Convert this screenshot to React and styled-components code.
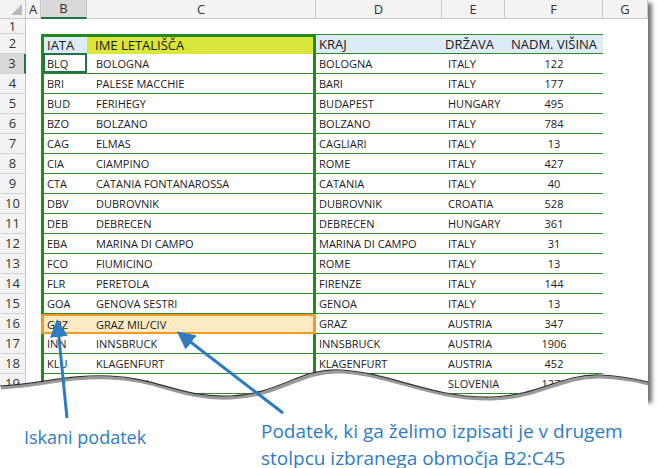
import React from "react";
import styled, { createGlobalStyle } from "styled-components";

const Global = createGlobalStyle`
  body { margin: 0; background: #fff; font-family: "Open Sans", "Liberation Sans", sans-serif; }
`;

const COLS = "26px 15px 46px 229px 126px 63px 98px 45px";

const Page = styled.div`
  position: relative;
  width: 657px;
  height: 468px;
  overflow: hidden;
  background: #fff;
`;

const Sheet = styled.div`
  width: 648px;
  height: 400px;
  overflow: hidden;
  background: #fff;
  box-shadow: 4px 3px 4px rgba(0, 0, 0, 0.55);
`;

const Row = styled.div`
  display: grid;
  grid-template-columns: ${COLS};
  height: ${(p) => p.$h}px;
  line-height: 1;
`;

const ColHead = styled.div`
  background: ${(p) => (p.$sel ? "#d9d9d9" : "#f3f3f3")};
  border-right: 1px solid #c8c8c8;
  border-bottom: ${(p) => (p.$sel ? "2px solid #217346" : "1px solid #c8c8c8")};
  font-size: 13px;
  color: #333;
  display: flex;
  align-items: center;
  justify-content: center;
  position: relative;
`;

const Corner = styled(ColHead)`
  &::after {
    content: "";
    position: absolute;
    right: 3px;
    bottom: 3px;
    border-left: 11px solid transparent;
    border-bottom: 11px solid #b9b9b9;
  }
`;

const RowHead = styled.div`
  background: ${(p) => (p.$sel ? "#d9d9d9" : "#f3f3f3")};
  border-right: ${(p) => (p.$sel ? "2px solid #217346" : "1px solid #c8c8c8")};
  border-bottom: 1px solid #d4d4d4;
  font-size: 13px;
  color: #333;
  display: flex;
  align-items: center;
  justify-content: center;
  overflow: hidden;
`;

const Cell = styled.div`
  display: flex;
  align-items: center;
  justify-content: ${(p) => (p.$center ? "center" : "flex-start")};
  padding-left: ${(p) => (p.$center ? 0 : 3)}px;
  font-size: ${(p) => (p.$head ? 13 : 11)}px;
  color: #1a1a1a;
  background: ${(p) => p.$bg || "transparent"};
  border-bottom: ${(p) => (p.$line ? "1.5px solid #2f8a2f" : "none")};
  border-top: ${(p) => (p.$top ? "1.5px solid #2f8a2f" : "none")};
  border-left: ${(p) => (p.$frameL ? "3px solid #1f8a1f" : "none")};
  border-right: ${(p) => (p.$frameR ? "3px solid #1f8a1f" : "none")};
  white-space: nowrap;
  position: relative;
  box-sizing: border-box;
`;

const Caption = styled.div`
  position: absolute;
  color: #2e7bc2;
  font-size: ${(p) => p.$size}px;
  line-height: 27px;
  font-family: "Open Sans", "Liberation Sans", sans-serif;
  white-space: nowrap;
`;

const data = [
  ["BLQ", "BOLOGNA", "BOLOGNA", "ITALY", "122"],
  ["BRI", "PALESE MACCHIE", "BARI", "ITALY", "177"],
  ["BUD", "FERIHEGY", "BUDAPEST", "HUNGARY", "495"],
  ["BZO", "BOLZANO", "BOLZANO", "ITALY", "784"],
  ["CAG", "ELMAS", "CAGLIARI", "ITALY", "13"],
  ["CIA", "CIAMPINO", "ROME", "ITALY", "427"],
  ["CTA", "CATANIA FONTANAROSSA", "CATANIA", "ITALY", "40"],
  ["DBV", "DUBROVNIK", "DUBROVNIK", "CROATIA", "528"],
  ["DEB", "DEBRECEN", "DEBRECEN", "HUNGARY", "361"],
  ["EBA", "MARINA DI CAMPO", "MARINA DI CAMPO", "ITALY", "31"],
  ["FCO", "FIUMICINO", "ROME", "ITALY", "13"],
  ["FLR", "PERETOLA", "FIRENZE", "ITALY", "144"],
  ["GOA", "GENOVA SESTRI", "GENOA", "ITALY", "13"],
  ["GRZ", "GRAZ MIL/CIV", "GRAZ", "AUSTRIA", "347"],
  ["INN", "INNSBRUCK", "INNSBRUCK", "AUSTRIA", "1906"],
  ["KLU", "KLAGENFURT", "KLAGENFURT", "AUSTRIA", "452"],
  ["LJU", "LJUBLJANA", "LJUBLJANA", "SLOVENIA", "1273"],
];

const HlCell = styled(Cell)`
  background: #fde9c4;
  border-top: 2px solid #f39a1c;
  border-bottom: 2px solid #f39a1c;
`;

const WAVE =
  "M0,386 C40,384 70,374 110,376 C160,378 180,398 230,396 C280,394 300,368 340,370 C390,372 430,398 490,397 C540,396 560,374 600,375 C625,376 640,380 648,382";

export default function App() {
  return (
    <Page>
      <Global />
      <Sheet>
        <Row $h={19}>
          <Corner />
          {["A", "B", "C", "D", "E", "F", "G"].map((c) => (
            <ColHead key={c} $sel={c === "B"}>{c}</ColHead>
          ))}
        </Row>
        <Row $h={15}>
          <RowHead>1</RowHead>
          <Cell /><Cell /><Cell /><Cell /><Cell /><Cell /><Cell />
        </Row>
        <Row $h={20}>
          <RowHead>2</RowHead>
          <Cell />
          <Cell $head $frameL $bg="#ddebf7" style={{ borderTop: "3px solid #1f8a1f" }}>IATA</Cell>
          <Cell $head $frameR $bg="#d9e63a" style={{ borderTop: "3px solid #1f8a1f", paddingLeft: 8 }}>IME LETALIŠČA</Cell>
          <Cell $head $bg="#ddebf7" $top $line>KRAJ</Cell>
          <Cell $head $bg="#ddebf7" $top $line>DRŽAVA</Cell>
          <Cell $head $bg="#ddebf7" $top $line $center>NADM. VIŠINA</Cell>
          <Cell />
        </Row>
        {data.map((r, i) => {
          const n = i + 3;
          const hl = n === 16;
          const B = hl ? HlCell : Cell;
          return (
            <Row $h={20} key={n}>
              <RowHead $sel={n === 3}>{n}</RowHead>
              <Cell />
              <B $line $frameL style={hl ? { borderLeft: "3px solid #f39a1c" } : undefined}>
                {r[0]}
                {n === 3 && (
                  <span style={{ position: "absolute", left: -1, top: -1, width: 44, height: 20, border: "2px solid #217346", boxSizing: "border-box" }} />
                )}
              </B>
              <B $line $frameR style={{ paddingLeft: 9, ...(hl ? { borderRight: "3px solid #f39a1c" } : {}) }}>{r[1]}</B>
              <Cell $line>{r[2]}</Cell>
              <Cell $line style={{ paddingLeft: 6 }}>{r[3]}</Cell>
              <Cell $line $center>{r[4]}</Cell>
              <Cell />
            </Row>
          );
        })}
      </Sheet>
      <svg width="657" height="468" style={{ position: "absolute", left: 0, top: 0 }}>
        <defs>
          <marker id="ah" markerWidth="6" markerHeight="6" refX="3" refY="3" orient="auto">
            <path d="M0,0 L6,3 L0,6 Z" fill="#2e7bc2" />
          </marker>
        </defs>
        <path d={WAVE + " L648,468 L0,468 Z"} fill="#fff" />
        <path d={WAVE} fill="none" stroke="#555" strokeWidth="3" transform="translate(1,2)" opacity="0.6" />
        <path d={WAVE} fill="none" stroke="#333" strokeWidth="1.2" />
        <line x1="67" y1="418" x2="58" y2="328" stroke="#2e7bc2" strokeWidth="3" markerEnd="url(#ah)" />
        <line x1="283" y1="413" x2="184" y2="337" stroke="#2e7bc2" strokeWidth="3" markerEnd="url(#ah)" />
      </svg>
      <Caption $size={18} style={{ left: 24, top: 424 }}>Iskani podatek</Caption>
      <Caption $size={19} style={{ left: 261, top: 418 }}>
        Podatek, ki ga želimo izpisati je v drugem
        <br />
        stolpcu izbranega območja B2:C45
      </Caption>
    </Page>
  );
}
